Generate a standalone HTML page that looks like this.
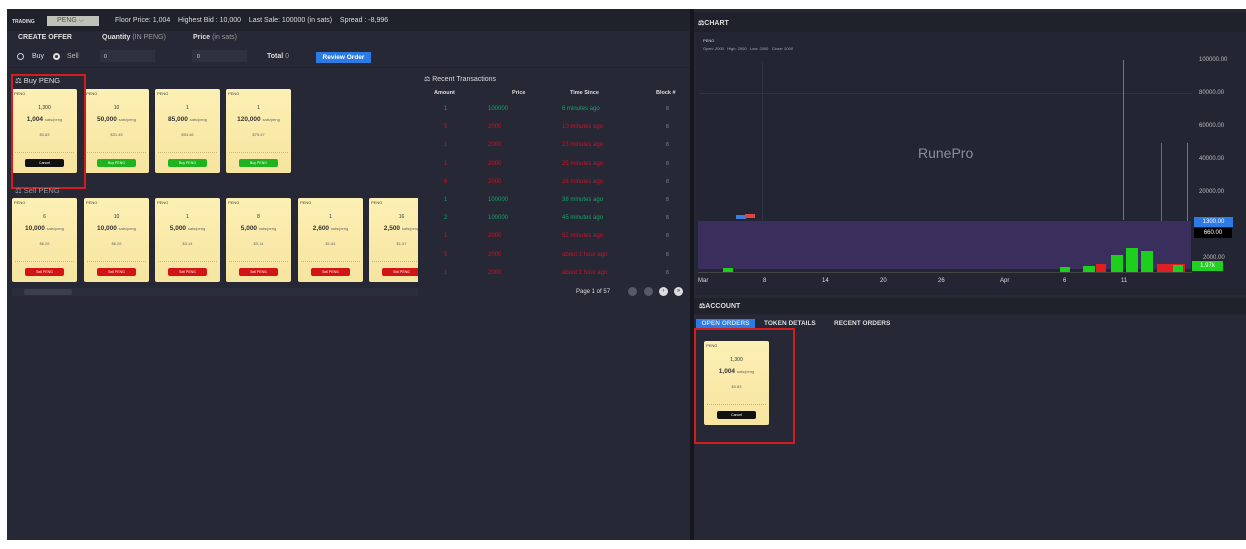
<!DOCTYPE html>
<html><head><meta charset="utf-8"><style>
*{margin:0;padding:0;box-sizing:border-box}
body{width:1246px;height:549px;background:#fff;position:relative;overflow:hidden;font-family:"Liberation Sans",sans-serif;color:#ddd}
.a{position:absolute}
.t{position:absolute;white-space:nowrap;font-size:7px}
.card{position:absolute;width:65px;height:84px;background:linear-gradient(#fdf0b4,#f6e4a0);border-radius:2px;color:#333;font-size:5px}
.card .pg{position:absolute;left:2px;top:2px;font-size:4px;color:#444}
.card .q{position:absolute;left:0;right:0;top:16px;text-align:center;font-size:5px}
.card .p{position:absolute;left:0;right:0;top:27px;text-align:center;font-size:6.5px;font-weight:bold}
.card .p span{font-weight:normal;font-size:4px;color:#666}
.card .u{position:absolute;left:0;right:0;top:43px;text-align:center;font-size:4px;color:#666}
.card .bar{position:absolute;left:3px;right:3px;top:63px;height:3px;border-top:1px dotted #c9b87a}
.card .b{position:absolute;left:13px;width:39px;top:70px;height:8px;border-radius:2px;font-size:3.5px;text-align:center;line-height:8px;color:#fff}
.g{background:#1fb41f}.r{background:#d21414}.k{background:#111}
.row{position:absolute;left:430px;width:260px;font-size:6px}
</style></head><body>
<div class="a" style="left:7px;top:9px;width:1239px;height:531px;background:#262835"></div>
<div class="a" style="left:7px;top:9px;width:683px;height:22px;background:#1f212b"></div>
<div class="a" style="left:690px;top:9px;width:4px;height:531px;background:#16171e"></div>
<!-- top bar -->
<div class="t" style="left:12px;top:19px;font-size:5px;font-weight:bold">TRADING</div>
<div class="a" style="left:47px;top:16px;width:52px;height:10px;background:#bfc2b8;color:#555;font-size:7px;padding-left:10px;line-height:10px">PENG ⌵</div>
<div class="t" style="left:115px;top:17px">Floor Price: 1,004 &nbsp;&nbsp; Highest Bid : 10,000 &nbsp;&nbsp; Last Sale: 100000 (in sats) &nbsp;&nbsp; Spread : -8,996</div>
<div class="t" style="left:18px;top:34px;font-weight:bold">CREATE OFFER</div>
<div class="t" style="left:102px;top:34px;font-weight:bold">Quantity <span style="color:#999;font-weight:normal">(IN PENG)</span></div>
<div class="t" style="left:193px;top:34px;font-weight:bold">Price <span style="color:#999;font-weight:normal">(in sats)</span></div>
<div class="a" style="left:17px;top:53px;width:7px;height:7px;border:1px solid #ccc;border-radius:50%"></div>
<div class="t" style="left:32px;top:53px">Buy</div>
<div class="a" style="left:53px;top:53px;width:7px;height:7px;border:2px solid #ddd;background:#333;border-radius:50%"></div>
<div class="t" style="left:67px;top:53px;color:#bbb">Sell</div>
<div class="a" style="left:100px;top:50px;width:55px;height:12px;background:#2e3140"></div>
<div class="t" style="left:104px;top:54px;font-size:5px">0</div>
<div class="a" style="left:192px;top:50px;width:55px;height:12px;background:#2e3140"></div>
<div class="t" style="left:197px;top:54px;font-size:5px">0</div>
<div class="t" style="left:267px;top:53px;font-weight:bold">Total <span style="color:#999;font-weight:normal">0</span></div>
<div class="a" style="left:316px;top:52px;width:55px;height:11px;background:#2c7be5;color:#fff;font-size:6.5px;font-weight:bold;text-align:center;line-height:11px">Review Order</div>
<div class="a" style="left:7px;top:67px;width:683px;height:1px;background:#1f212b"></div>
<!-- buy -->
<div class="t" style="left:15px;top:76px;font-size:7.5px">⚖ Buy PENG</div>
<div class="card" style="left:12px;top:89px"><div class="pg">PENG</div><div class="q">1,300</div><div class="p">1,004 <span>sats/peng</span></div><div class="u">$0.83</div><div class="bar"></div><div class="b k">Cancel</div></div>
<div class="card" style="left:84px;top:89px"><div class="pg">PENG</div><div class="q">10</div><div class="p">50,000 <span>sats/peng</span></div><div class="u">$31.45</div><div class="bar"></div><div class="b g">Buy PENG</div></div>
<div class="card" style="left:155px;top:89px"><div class="pg">PENG</div><div class="q">1</div><div class="p">85,000 <span>sats/peng</span></div><div class="u">$53.46</div><div class="bar"></div><div class="b g">Buy PENG</div></div>
<div class="card" style="left:226px;top:89px"><div class="pg">PENG</div><div class="q">1</div><div class="p">120,000 <span>sats/peng</span></div><div class="u">$75.47</div><div class="bar"></div><div class="b g">Buy PENG</div></div>
<div class="a" style="left:11px;top:74px;width:75px;height:115px;border:2px solid #d51c1c"></div>
<!-- sell -->
<div class="t" style="left:15px;top:186px;font-size:7.5px;color:#999">⚖ Sell PENG</div>
<div class="card" style="left:12px;top:198px"><div class="pg">PENG</div><div class="q">6</div><div class="p">10,000 <span>sats/peng</span></div><div class="u">$6.29</div><div class="bar"></div><div class="b r">Sell PENG</div></div>
<div class="card" style="left:84px;top:198px"><div class="pg">PENG</div><div class="q">10</div><div class="p">10,000 <span>sats/peng</span></div><div class="u">$6.29</div><div class="bar"></div><div class="b r">Sell PENG</div></div>
<div class="card" style="left:155px;top:198px"><div class="pg">PENG</div><div class="q">1</div><div class="p">5,000 <span>sats/peng</span></div><div class="u">$3.14</div><div class="bar"></div><div class="b r">Sell PENG</div></div>
<div class="card" style="left:226px;top:198px"><div class="pg">PENG</div><div class="q">8</div><div class="p">5,000 <span>sats/peng</span></div><div class="u">$3.14</div><div class="bar"></div><div class="b r">Sell PENG</div></div>
<div class="card" style="left:298px;top:198px"><div class="pg">PENG</div><div class="q">1</div><div class="p">2,600 <span>sats/peng</span></div><div class="u">$1.64</div><div class="bar"></div><div class="b r">Sell PENG</div></div>
<div class="a" style="left:369px;top:198px;width:49px;height:84px;overflow:hidden"><div class="card" style="left:0;top:0"><div class="pg">PENG</div><div class="q">16</div><div class="p">2,500 <span>sats/peng</span></div><div class="u">$1.57</div><div class="bar"></div><div class="b r">Sell PENG</div></div></div>
<div class="a" style="left:12px;top:288px;width:406px;height:8px;background:#2a2d3a"></div>
<div class="a" style="left:24px;top:289px;width:48px;height:6px;background:#3a3e4d;border-radius:2px"></div>
<!-- transactions -->
<div class="t" style="left:424px;top:75px;font-size:7px">⚖ Recent Transactions</div>
<div class="t" style="left:434px;top:90px;font-size:5.5px;font-weight:bold">Amount</div>
<div class="t" style="left:512px;top:90px;font-size:5.5px;font-weight:bold">Price</div>
<div class="t" style="left:570px;top:90px;font-size:5.5px;font-weight:bold">Time Since</div>
<div class="t" style="left:656px;top:90px;font-size:5.5px;font-weight:bold">Block #</div>
<div id="tx"></div>
<div class="t" style="left:576px;top:289px;font-size:6px">Page 1 of 57</div>
<div class="a" style="left:628px;top:287px;width:9px;height:9px;border-radius:50%;background:#555a66"></div>
<div class="a" style="left:644px;top:287px;width:9px;height:9px;border-radius:50%;background:#555a66"></div>
<div class="a" style="left:659px;top:287px;width:9px;height:9px;border-radius:50%;background:#ddd;color:#333;font-size:6px;text-align:center;line-height:9px">›</div>
<div class="a" style="left:674px;top:287px;width:9px;height:9px;border-radius:50%;background:#ddd;color:#333;font-size:6px;text-align:center;line-height:9px">»</div>
<!-- chart -->
<div class="a" style="left:694px;top:12px;width:552px;height:20px;background:#1f212b"></div>
<div class="t" style="left:698px;top:19px;font-size:7px;font-weight:bold">⚖CHART</div>
<div class="a" style="left:696px;top:32px;width:550px;height:263px;background:#232533"></div>
<div class="t" style="left:703px;top:38px;font-size:4px">PENG</div>
<div class="t" style="left:703px;top:46px;font-size:4px;color:#aaa">Open: 2000 &nbsp; High: 2000 &nbsp; Low: 2000 &nbsp; Close: 2000</div>
<div class="a" style="left:699px;top:93px;width:493px;height:1px;background:#2f3242"></div>
<div class="a" style="left:762px;top:62px;width:1px;height:200px;background:#2f3242"></div>
<div class="a" style="left:698px;top:221px;width:493px;height:48px;background:#3a2f5c"></div>
<div class="t" style="left:918px;top:145px;font-size:14px;color:#8a8d99">RunePro</div>
<div class="a" style="left:1123px;top:60px;width:1px;height:160px;background:#3d7de0"></div>
<div class="a" style="left:1161px;top:143px;width:1px;height:78px;background:#c0455a"></div>
<div class="a" style="left:1187px;top:143px;width:1px;height:78px;background:#3d7de0"></div>
<div class="a" style="left:736px;top:215px;width:10px;height:4px;background:#3d7de0"></div>
<div class="a" style="left:745px;top:214px;width:10px;height:4px;background:#e04545"></div>
<div class="a" style="left:1126px;top:248px;width:12px;height:24px;background:#1ed01e"></div>
<div class="a" style="left:1111px;top:255px;width:12px;height:17px;background:#1ed01e"></div>
<div class="a" style="left:1141px;top:251px;width:12px;height:21px;background:#1ed01e"></div>
<div class="a" style="left:1096px;top:264px;width:10px;height:8px;background:#e02020"></div>
<div class="a" style="left:1157px;top:264px;width:28px;height:8px;background:#e02020"></div>
<div class="a" style="left:1083px;top:266px;width:12px;height:6px;background:#1ed01e"></div>
<div class="a" style="left:1060px;top:267px;width:10px;height:5px;background:#1ed01e"></div>
<div class="a" style="left:1173px;top:265px;width:10px;height:7px;background:#1ed01e"></div>
<div class="a" style="left:723px;top:268px;width:10px;height:4px;background:#1ed01e"></div>
<div class="a" style="left:698px;top:272px;width:494px;height:1px;background:#444"></div>
<div class="t" style="left:1199px;top:57px;font-size:6px;color:#bbb">100000.00</div>
<div class="t" style="left:1199px;top:90px;font-size:6px;color:#bbb">80000.00</div>
<div class="t" style="left:1199px;top:123px;font-size:6px;color:#bbb">60000.00</div>
<div class="t" style="left:1199px;top:156px;font-size:6px;color:#bbb">40000.00</div>
<div class="t" style="left:1199px;top:189px;font-size:6px;color:#bbb">20000.00</div>
<div class="a" style="left:1194px;top:217px;width:39px;height:10px;background:#2c7be5;color:#fff;font-size:6px;text-align:center;line-height:10px">1300.00</div>
<div class="a" style="left:1194px;top:228px;width:38px;height:10px;background:#000;color:#fff;font-size:6px;text-align:center;line-height:10px">660.00</div>
<div class="t" style="left:1203px;top:255px;font-size:6px;color:#bbb">2000.00</div>
<div class="a" style="left:1192px;top:261px;width:31px;height:10px;background:#22d022;color:#fff;font-size:6px;text-align:center;line-height:10px">1.97k</div>
<div class="t" style="left:698px;top:278px;font-size:6px">Mar</div>
<div class="t" style="left:763px;top:278px;font-size:6px">8</div>
<div class="t" style="left:822px;top:278px;font-size:6px">14</div>
<div class="t" style="left:880px;top:278px;font-size:6px">20</div>
<div class="t" style="left:938px;top:278px;font-size:6px">26</div>
<div class="t" style="left:1000px;top:278px;font-size:6px">Apr</div>
<div class="t" style="left:1063px;top:278px;font-size:6px">6</div>
<div class="t" style="left:1121px;top:278px;font-size:6px">11</div>
<!-- account -->
<div class="a" style="left:694px;top:298px;width:552px;height:16px;background:#1f212b"></div>
<div class="t" style="left:699px;top:302px;font-size:7px;font-weight:bold">⚖ACCOUNT</div>
<div class="a" style="left:696px;top:319px;width:59px;height:9px;background:#2c7be5;color:#cde;font-size:6.5px;font-weight:bold;text-align:center;line-height:9px">OPEN ORDERS</div>
<div class="t" style="left:764px;top:320px;font-size:6.5px;font-weight:bold">TOKEN DETAILS</div>
<div class="t" style="left:834px;top:320px;font-size:6.5px;font-weight:bold">RECENT ORDERS</div>
<div class="card" style="left:704px;top:341px"><div class="pg">PENG</div><div class="q">1,300</div><div class="p">1,004 <span>sats/peng</span></div><div class="u">$0.83</div><div class="bar"></div><div class="b k">Cancel</div></div>
<div class="a" style="left:694px;top:328px;width:101px;height:116px;border:2px solid #d51c1c"></div>
<script>
var d=[['1','100000','6 minutes ago','g'],['5','2000','10 minutes ago','r'],['1','2000','23 minutes ago','r'],['1','2000','25 minutes ago','r'],['6','2000','26 minutes ago','r'],['1','100000','38 minutes ago','g'],['2','100000','45 minutes ago','g'],['1','2000','52 minutes ago','r'],['5','2000','about 1 hour ago','r'],['1','2000','about 1 hour ago','r']];
var h='';d.forEach(function(r,i){var c=r[3]=='g'?'#13a46a':'#c4142a';var y=106+i*18.2;
h+='<div class="t" style="left:444px;top:'+y+'px;font-size:6px;color:'+c+'">'+r[0]+'</div><div class="t" style="left:488px;top:'+y+'px;font-size:6px;color:'+c+'">'+r[1]+'</div><div class="t" style="left:562px;top:'+y+'px;font-size:6px;color:'+c+'">'+r[2]+'</div><div class="t" style="left:666px;top:'+y+'px;font-size:5px;color:#888">8</div>';});
document.getElementById('tx').innerHTML=h;
</script>
</body></html>
